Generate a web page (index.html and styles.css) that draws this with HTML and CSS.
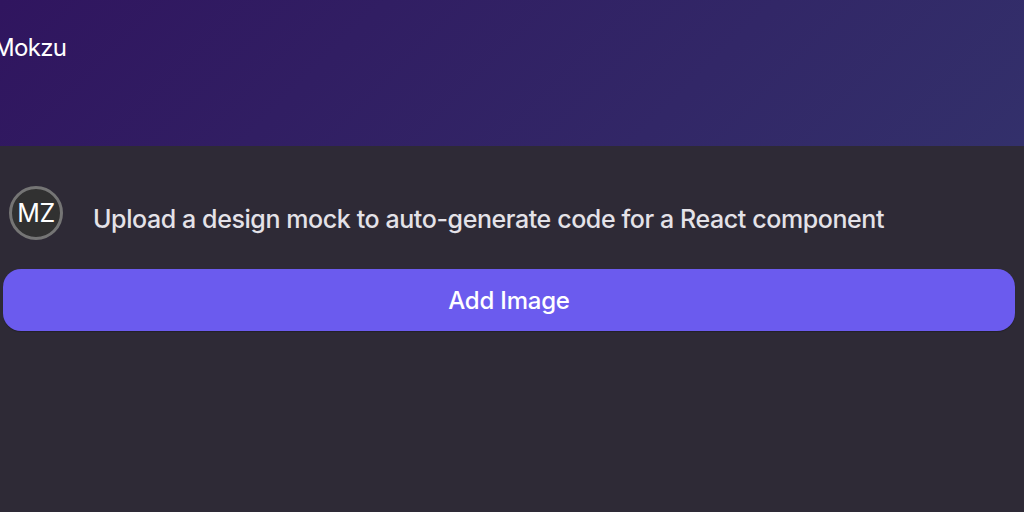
FILE: index.html
```html
<!DOCTYPE html>
<html lang="en">
<head>
  <meta charset="UTF-8" />
  <title>Mokzu</title>
  <link rel="stylesheet" href="styles.css">
</head>
<body>
  <header class="topbar">
    <span class="brand">Mokzu</span>
  </header>
  <main class="content">
    <div class="message">
      <div class="avatar">MZ</div>
      <p class="message-text">Upload a design mock to auto-generate code for a React component</p>
    </div>
    <button class="add-btn">Add Image</button>
  </main>
</body>
</html>
```

FILE: styles.css
```css
html, body { height: 100%; }
body { margin: 0; overflow: hidden; background: #2e2a36; color: #fff; font-family: Inter, 'Noto Sans', sans-serif; }
.topbar { height: 146px; box-sizing: border-box; padding: 33px 0 0 0; background: linear-gradient(135deg, #30155f 0%, #33306b 100%); }
.brand { display: block; margin-left: -7px; font-size: 24px; line-height: 29px; font-weight: 400; letter-spacing: -0.7px; }
.content { padding: 40px 9px 0 3px; }
.message { display: flex; align-items: center; gap: 30px; padding-left: 6px; }
.avatar { width: 54px; height: 54px; box-sizing: border-box; border: 3px solid #757575; border-radius: 50%; background: #313131; display: flex; align-items: center; justify-content: center; font-size: 25px; letter-spacing: -0.5px; }
.message-text { margin: 0; padding-top: 11px; font-size: 25px; font-weight: 500; line-height: 30px; color: #e4e2e8; letter-spacing: -0.41px; white-space: nowrap; }
.add-btn { display: block; width: 100%; height: 62px; margin-top: 29px; border: none; border-radius: 18px; background: #6b5bee; color: #fff; font: 500 24px Inter, 'Noto Sans', sans-serif; letter-spacing: -0.2px; box-shadow: 0 1px 1px rgba(0,0,0,.25); }
```
